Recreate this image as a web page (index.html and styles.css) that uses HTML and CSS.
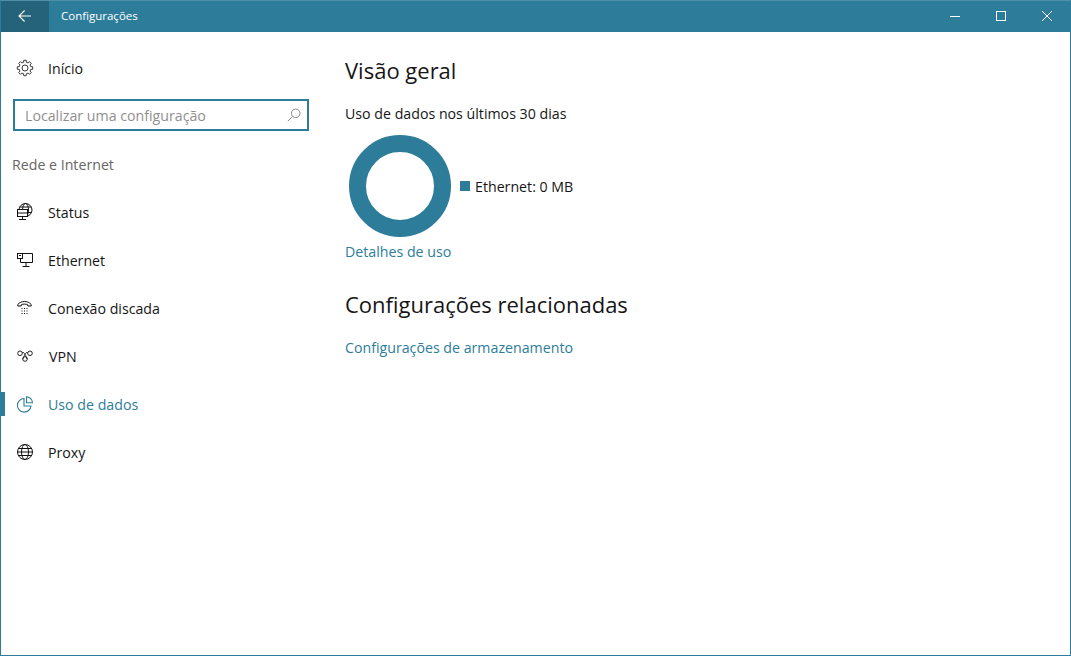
FILE: index.html
```html
<!DOCTYPE html>
<html lang="pt-BR">
<head>
<meta charset="utf-8">
<title>Configurações</title>
<link rel="stylesheet" href="styles.css">
</head>
<body>
<div class="window">
  <header class="titlebar">
    <div class="back">
      <svg width="16" height="16" viewBox="0 0 16 16"><path d="M14 8H2.300M7.600 2.500 2 8l5.600 5.500" fill="none" stroke="#fff" stroke-width="1.100"/></svg>
    </div>
    <div class="apptitle">Configurações</div>
    <div class="controls">
      <div class="ctl"><svg width="10" height="10" viewBox="0 0 10 10"><path d="M0 5.500h10" stroke="#fff" stroke-width="1"/></svg></div>
      <div class="ctl"><svg width="10" height="10" viewBox="0 0 10 10"><rect x=".5" y=".5" width="9" height="9" fill="none" stroke="#fff"/></svg></div>
      <div class="ctl"><svg width="10" height="10" viewBox="0 0 10 10"><path d="M0 0l10 10M10 0 0 10" stroke="#fff" stroke-width="1"/></svg></div>
    </div>
  </header>
  <div class="content">
    <nav class="sidebar">
      <div class="navitem">
        <svg class="ico" viewBox="0 0 16 16" fill="none" stroke="#222" stroke-width=".9"><circle cx="8" cy="8" r="3"/><polygon points="13.72,6.57 15.7,6.78 15.7,9.22 13.72,9.43 13.06,11.04 14.31,12.58 12.58,14.31 11.04,13.06 9.43,13.72 9.22,15.7 6.78,15.7 6.57,13.72 4.96,13.06 3.42,14.31 1.69,12.58 2.94,11.04 2.28,9.43 .3,9.22 .3,6.78 2.28,6.57 2.94,4.96 1.69,3.42 3.42,1.69 4.96,2.94 6.57,2.28 6.78,.3 9.22,.3 9.43,2.28 11.04,2.94 12.58,1.69 14.31,3.42 13.06,4.96"/></svg>
        <span>Início</span>
      </div>
      <div class="search">
        <span class="placeholder">Localizar uma configuração</span>
        <svg width="14" height="14" viewBox="0 0 14 14" fill="none" stroke="#8a8a8a"><circle cx="8.700" cy="5.300" r="4.300"/><path d="M5.600 8.400.8 13.200"/></svg>
      </div>
      <div class="section">Rede e Internet</div>
      <div class="navitem">
        <svg class="ico" viewBox="0 0 16 16" fill="none" stroke="#111"><circle cx="8.500" cy="6" r="6.500"/><ellipse cx="8.500" cy="6" rx="3" ry="6.500"/><path d="M2.500 3h12M11 8.500h3.500"/><rect x=".5" y="5.500" width="10" height="7" fill="#fff"/><path d="M.5 9h10M5.500 12.500V15M2 15.500h7"/></svg>
        <span>Status</span>
      </div>
      <div class="navitem">
        <svg class="ico" viewBox="0 0 16 16" fill="none" stroke="#111"><path d="M5.500 1.500h10v9H3.500V6.500M9 10.500v4M5.500 14.500h7"/><rect x=".5" y="1.500" width="5" height="5"/><path d="M2 3.500h2"/></svg>
        <span>Ethernet</span>
      </div>
      <div class="navitem">
        <svg class="ico" viewBox="0 0 16 16" fill="none" stroke="#111"><path d="M.8 6V4.500C2.500 2.500 4.800 1.500 7.500 1.500s5 1 6.700 3V6h-3.400V4.800c-1-.5-2-.7-3.300-.7s-2.300.2-3.300.7V6z"/><path d="M4.500 8.500h1M7 8.500h1M9.500 8.500h1M4.500 11h1M7 11h1M9.500 11h1M4.500 13.500h1M7 13.500h1M9.500 13.500h1"/></svg>
        <span>Conexão discada</span>
      </div>
      <div class="navitem">
        <svg class="ico" viewBox="0 0 16 16" fill="none" stroke="#111" stroke-width=".9"><circle cx="3" cy="5.300" r="2.300"/><circle cx="13" cy="5.300" r="2.300"/><circle cx="8" cy="11" r="2.300"/><path d="M5.200 4.700c1.500-.5 2.300.3 3 1.800.6 1.300 1 2.500 2 4.500M10.800 4.700c-1.500-.5-2.300.3-3 1.800-.6 1.300-1 2.500-2 4.500"/></svg>
        <span class="vpn">VPN</span>
      </div>
      <div class="navitem active">
        <svg class="ico" viewBox="0 0 16 16" fill="none" stroke="#2d7d9a" stroke-width="1.100"><path d="M7 2.500a6.800 6.800 0 1 0 7 7.500H7z"/><path d="M9.500.8v6h6a6 6 0 0 0-6-6z"/></svg>
        <span>Uso de dados</span>
      </div>
      <div class="navitem">
        <svg class="ico" viewBox="0 0 16 16" fill="none" stroke="#111"><circle cx="8" cy="8" r="7.500"/><ellipse cx="8" cy="8" rx="3.500" ry="7.500"/><path d="M.5 8h15M1.500 4.500h13M1.500 11.500h13"/></svg>
        <span>Proxy</span>
      </div>
    </nav>
    <main class="main">
      <h1 class="heading">Visão geral</h1>
      <p class="subhead">Uso de dados nos últimos 30 dias</p>
      <div class="chart">
        <div class="donut"></div>
        <div class="legend"><span class="swatch"></span><span>Ethernet: 0 MB</span></div>
      </div>
      <a class="link details">Detalhes de uso</a>
      <h2 class="heading related">Configurações relacionadas</h2>
      <a class="link storage">Configurações de armazenamento</a>
    </main>
  </div>
</div>
</body>
</html>
```

FILE: styles.css
```css
* { box-sizing: border-box; }
html, body { margin: 0; height: 100%; }
body { font-family: "Open Sans", "Noto Sans", sans-serif; font-size: 14.2px; color: #161616; background: #fff; overflow: hidden; }
.window { width: 1071px; height: 656px; border: 1px solid #2d7d9a; border-top-color: #4f8fa9; display: flex; flex-direction: column; }
.titlebar { height: 31px; flex: none; background: #2d7d9a; display: flex; color: #fff; }
.back { width: 48px; height: 31px; padding-bottom: 1px; background: #25637b; display: flex; align-items: center; justify-content: center; }
.apptitle { margin-left: 12px; font-size: 11.5px; line-height: 29px; flex: 1; }
.controls { display: flex; }
.ctl { width: 46px; height: 30px; display: flex; align-items: center; justify-content: center; }
.content { flex: 1; display: flex; }
.sidebar { width: 344px; flex: none; padding-top: 12px; }
.navitem { position: relative; height: 48px; display: flex; align-items: center; gap: 15px; padding-left: 16px; }
.ico { width: 16px; height: 16px; flex: none; overflow: visible; }
.vpn { margin-left: 1px; }
.search { margin: 7px 0 0 12px; width: 296px; height: 32px; border: 2px solid #2d7d9a; display: flex; align-items: center; justify-content: space-between; padding: 0 6px 0 10px; }
.placeholder { color: #8f8f8f; }
.section { margin: 22px 0 11px 11px; height: 24px; line-height: 24px; color: #666; }
.active { color: #2d7d9a; }
.active::before { content: ""; position: absolute; left: 0; top: 12px; width: 4px; height: 24px; background: #2d7d9a; }
.main { flex: 1; display: flex; flex-direction: column; align-items: flex-start; padding-top: 21px; }
.heading { margin: 0; font-size: 22px; font-weight: 400; line-height: 34px; color: #161616; }
.subhead { margin: 17px 0 0; line-height: 20px; }
.chart { margin-top: 11px; display: flex; align-items: center; padding-left: 4px; }
.donut { width: 102px; height: 102px; border-radius: 50%; border: 17px solid #2d7d9a; }
.legend { margin-left: 9px; display: flex; align-items: center; gap: 5px; }
.swatch { width: 10px; height: 10px; background: #2d7d9a; }
.link { color: #2d7d9a; line-height: 20px; }
.details { margin-top: 5px; }
.related { margin-top: 25px; }
.storage { margin-top: 17px; }
```
